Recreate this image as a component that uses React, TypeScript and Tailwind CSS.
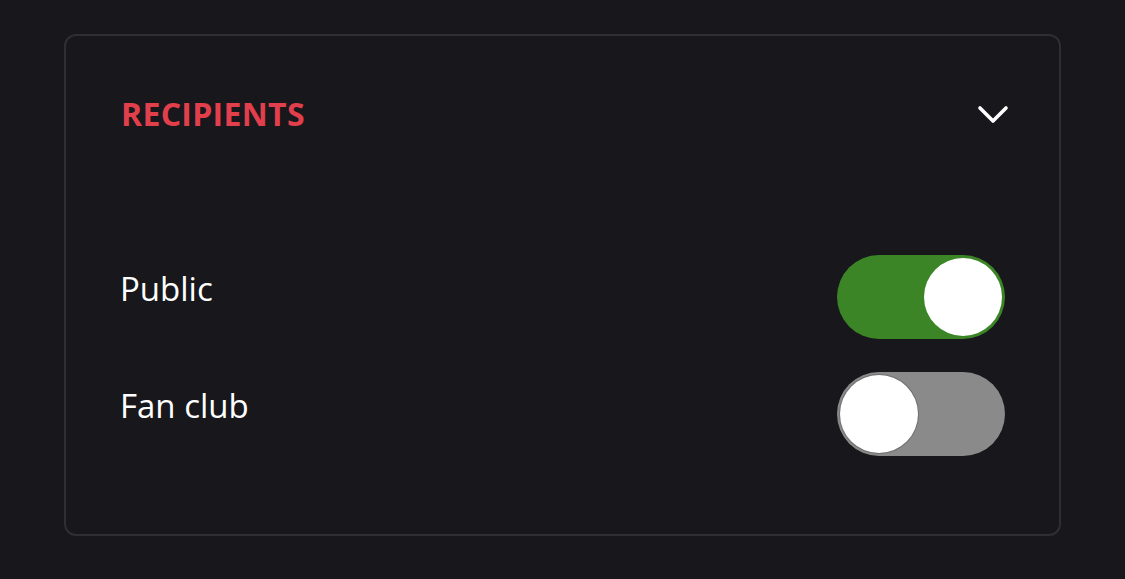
import React from "react";

function Toggle({ on }: { on: boolean }) {
  return (
    <div
      className={
        "relative w-[168px] h-[84px] rounded-full " +
        (on ? "bg-[#3b8526]" : "bg-[#8a8a8a]")
      }
    >
      <div
        className={
          "absolute top-[3px] w-[78px] h-[78px] rounded-full bg-white " +
          (on ? "right-[3px]" : "left-[3px] shadow-[0_0_0_1px_#6f6f6f]")
        }
      />
    </div>
  );
}

export default function App() {
  return (
    <div
      className="w-[1125px] h-[579px] bg-[#18171c] pt-[34px] px-16"
      style={{ fontFamily: '"Open Sans", "Noto Sans", sans-serif' }}
    >
      <div className="border-2 border-[#2f2e34] rounded-[12px] h-[502px] pl-[55px] pr-[54px]">
        <div className="h-[156px] flex items-center justify-between">
          <div className="text-[32px] font-bold text-[#e23f4c] tracking-[0.3px] leading-none">
            RECIPIENTS
          </div>
          <svg width="34" height="22" viewBox="0 0 34 22" className="mr-[-6px]">
            <polyline
              points="3,5 16,18 29,5"
              fill="none"
              stroke="white"
              strokeWidth="3.6"
              strokeLinecap="round"
              strokeLinejoin="round"
            />
          </svg>
        </div>
        <div className="mt-[63px] flex flex-col gap-[33px]">
          <div className="h-[84px] flex items-center justify-between">
            <span className="text-[33px] text-white leading-none mb-[17px] ml-[-1px]">Public</span>
            <Toggle on={true} />
          </div>
          <div className="h-[84px] flex items-center justify-between">
            <span className="text-[33px] text-white leading-none mb-[17px] ml-[-1px]">Fan club</span>
            <Toggle on={false} />
          </div>
        </div>
      </div>
    </div>
  );
}
